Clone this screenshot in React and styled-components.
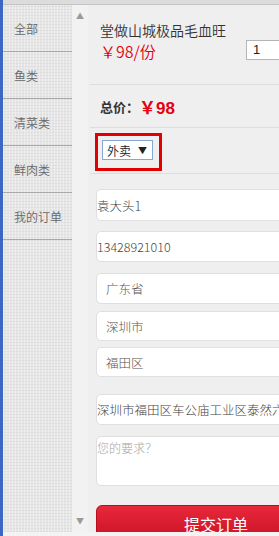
import React from "react"
import styled, { createGlobalStyle } from "styled-components"

const GlobalStyle = createGlobalStyle`
  html, body {
    margin: 0;
    padding: 0;
    width: 279px;
    height: 536px;
    overflow: hidden;
    background: #efefef;
    font-family: "Noto Sans CJK SC", "Liberation Sans", sans-serif;
  }
`

const categories = ["全部", "鱼类", "清菜类", "鲜肉类", "我的订单"]

const fields = [
  { text: "袁大头1", mt: 15, h: 32 },
  { text: "13428921010", mt: 10, h: 31 },
  { text: "广东省", mt: 11, h: 31, indent: true },
  { text: "深圳市", mt: 7, h: 30, indent: true },
  { text: "福田区", mt: 6, h: 30, indent: true },
  { text: "深圳市福田区车公庙工业区泰然六路", mt: 17, h: 31 },
]

const Page = styled.div`
  display: flex;
  flex-direction: column;
  height: 536px;
  width: 279px;
  overflow: hidden;
  border-left: 3px solid #3c68c4;
  box-sizing: border-box;
`

const TopStrip = styled.div`
  height: 4px;
  flex-shrink: 0;
  background: #dcdcdc;
  border-bottom: 1px solid #c4c4c4;
`

const BottomStrip = styled.div`
  height: 4px;
  flex-shrink: 0;
  background: #f3f3f3;
`

const Body = styled.div`
  flex: 1;
  display: flex;
  min-height: 0;
`

const Sidebar = styled.nav`
  width: 69px;
  flex-shrink: 0;
  background-color: #e6e6e6;
  background-image:
    repeating-linear-gradient(90deg, rgba(255, 255, 255, 0.35) 0 1px, transparent 1px 3px),
    repeating-linear-gradient(0deg, rgba(0, 0, 0, 0.04) 0 1px, transparent 1px 3px);
`

const NavItem = styled.div`
  height: 46px;
  display: flex;
  align-items: center;
  padding-left: 11px;
  font-size: 12px;
  font-weight: 350;
  color: #666;
  border-bottom: 1px solid #a9a9a9;
`

const Gutter = styled.div`
  width: 16px;
  flex-shrink: 0;
  display: flex;
  flex-direction: column;
  justify-content: space-between;
  align-items: center;
  padding: 7px 0 7px;
  background: #f2f2f2;
  color: #9a9a9a;
  font-size: 8px;
  line-height: 8px;
`

const Main = styled.main`
  width: 240px;
  flex-shrink: 0;
  padding-left: 8px;
  background: #efefef;
`

const Product = styled.section`
  height: 79px;
  display: flex;
  margin-left: -6px;
  padding-left: 10px;
  border-bottom: 1px solid #dedede;
`

const ProductInfo = styled.div`
  width: 146px;
  flex-shrink: 0;
  padding-top: 15px;
`

const Title = styled.div`
  font-size: 14px;
  font-weight: 350;
  line-height: 20px;
  color: #333;
`

const UnitPrice = styled.div`
  font-size: 16px;
  font-weight: 350;
  line-height: 22px;
  color: #e60012;
`

const Qty = styled.div`
  margin-top: 35px;
  width: 60px;
  height: 20px;
  flex-shrink: 0;
  box-sizing: border-box;
  background: #fff;
  border: 1px solid #b5b5b5;
  font-family: "Liberation Sans", sans-serif;
  font-size: 13px;
  line-height: 18px;
  padding-left: 6px;
  color: #222;
`

const Total = styled.section`
  height: 42px;
  display: flex;
  align-items: center;
  padding-left: 10px;
  margin-left: -6px;
  border-bottom: 1px solid #dedede;
`

const TotalLabel = styled.span`
  font-size: 13px;
  font-weight: bold;
  color: #333;
`

const TotalPrice = styled.span`
  font-size: 17px;
  font-weight: bold;
  color: #e60012;
  font-family: "Liberation Sans", "Noto Sans CJK SC", sans-serif;
`

const Delivery = styled.section`
  height: 46px;
  padding-top: 5px;
  box-sizing: border-box;
  border-bottom: 1px solid #dedede;
  margin-left: -6px;
  padding-left: 5px;
`

const Highlight = styled.div`
  display: inline-block;
  border: 3px solid #e00000;
  padding: 4px 6px 8px 4px;
`

const Select = styled.div`
  width: 51px;
  height: 20px;
  box-sizing: border-box;
  display: flex;
  align-items: center;
  justify-content: space-between;
  padding: 0 5px 0 4px;
  background: #fff;
  border: 1px solid #86a6d4;
  font-size: 12px;
  font-weight: 350;
  color: #222;
`

const Arrow = styled.span`
  font-size: 9px;
`

const Field = styled.div`
  margin-top: ${p => p.$mt}px;
  height: ${p => p.$h}px;
  box-sizing: border-box;
  display: flex;
  align-items: center;
  padding-left: ${p => (p.$indent ? 9 : 0)}px;
  background: #fff;
  border: 1px solid #dfdfdf;
  border-radius: 5px;
  font-size: 12.5px;
  font-weight: 300;
  color: ${p => (p.$indent ? "#555" : "#444")};
  white-space: nowrap;
  overflow: hidden;
`

const Remark = styled.div`
  margin-top: 11px;
  height: 50px;
  box-sizing: border-box;
  padding-top: 2px;
  background: #fff;
  border: 1px solid #dfdfdf;
  border-radius: 5px;
  font-size: 12px;
  font-weight: 300;
  color: #a5a5a5;
`

const Submit = styled.div`
  margin-top: 19px;
  height: 34px;
  border-radius: 6px;
  background: linear-gradient(#e8283b, #cc1327);
  border: 1px solid #b80f20;
  color: #fff;
  font-size: 16px;
  display: flex;
  justify-content: center;
  padding-top: 6px;
  box-sizing: border-box;
`

export default function App() {
  return (
    <>
      <GlobalStyle />
      <Page>
        <TopStrip />
        <Body>
          <Sidebar>
            {categories.map(c => (
              <NavItem key={c}>{c}</NavItem>
            ))}
          </Sidebar>
          <Gutter>
            <span>▲</span>
            <span>▼</span>
          </Gutter>
          <Main>
            <Product>
              <ProductInfo>
                <Title>堂做山城极品毛血旺</Title>
                <UnitPrice>￥98/份</UnitPrice>
              </ProductInfo>
              <Qty>1</Qty>
            </Product>
            <Total>
              <TotalLabel>总价：</TotalLabel>
              <TotalPrice>￥98</TotalPrice>
            </Total>
            <Delivery>
              <Highlight>
                <Select>
                  外卖 <Arrow>▼</Arrow>
                </Select>
              </Highlight>
            </Delivery>
            {fields.map(f => (
              <Field key={f.text} $mt={f.mt} $h={f.h} $indent={f.indent}>
                {f.text}
              </Field>
            ))}
            <Remark>您的要求？</Remark>
            <Submit>提交订单</Submit>
          </Main>
        </Body>
        <BottomStrip />
      </Page>
    </>
  )
}
